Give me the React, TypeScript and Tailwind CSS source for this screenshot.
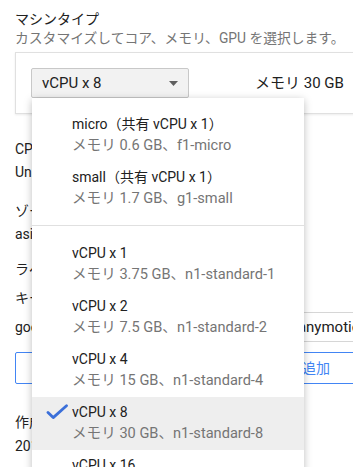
import React from 'react';

type MachineOption = {
  title: string;
  detail: string;
  selected?: boolean;
};

const sharedCore: MachineOption[] = [
  { title: 'micro（共有 vCPU x 1）', detail: 'メモリ 0.6 GB、f1-micro' },
  { title: 'small（共有 vCPU x 1）', detail: 'メモリ 1.7 GB、g1-small' },
];

const standard: MachineOption[] = [
  { title: 'vCPU x 1', detail: 'メモリ 3.75 GB、n1-standard-1' },
  { title: 'vCPU x 2', detail: 'メモリ 7.5 GB、n1-standard-2' },
  { title: 'vCPU x 4', detail: 'メモリ 15 GB、n1-standard-4' },
  { title: 'vCPU x 8', detail: 'メモリ 30 GB、n1-standard-8', selected: true },
  { title: 'vCPU x 16', detail: 'メモリ 60 GB、n1-standard-16' },
  { title: 'vCPU x 32', detail: 'メモリ 120 GB、n1-standard-32' },
];

const OptionRow: React.FC<{ option: MachineOption }> = ({ option }) => (
  <div className={`flex h-[53px] pt-[5px] ${option.selected ? 'bg-[#eeeeee]' : ''}`}>
    <div className="w-[40px] shrink-0 pl-[14px] pt-[2px]">
      {option.selected && (
        <svg width="22" height="16" viewBox="0 0 22 16" fill="none">
          <path d="M2 8.5 L7.2 13.6 L20.5 1.8" stroke="#3b6fd9" strokeWidth="2.8" strokeLinecap="round" strokeLinejoin="round" />
        </svg>
      )}
    </div>
    <div className="leading-[21px] whitespace-nowrap">
      <div className="text-[14px] text-[#212121]">{option.title}</div>
      <div className="text-[14.6px] text-[#757575]">{option.detail}</div>
    </div>
  </div>
);

const MachineDropdown: React.FC = () => (
  <div className="absolute left-[1px] top-[30px] z-10 w-[272px] h-[420px] bg-white shadow-[0_2px_8px_rgba(0,0,0,0.26)]">
    <div className="pt-[11px] pb-[10px]">
      {sharedCore.map((o) => (
        <OptionRow key={o.title} option={o} />
      ))}
    </div>
    <div className="h-px bg-[#e0e0e0]" />
    <div className="pt-[12px]">
      {standard.map((o) => (
        <OptionRow key={o.title} option={o} />
      ))}
    </div>
  </div>
);

export default function App() {
  return (
    <div className="relative w-[353px] h-[467px] overflow-hidden bg-white text-[#212121] font-[family-name:Roboto,'Noto_Sans_CJK_JP',sans-serif]">
      <div className="px-[15px] pt-[9px]">
        <div className="text-[14px] leading-[20px]">マシンタイプ</div>
        <div className="text-[13.8px] leading-[19px] text-[#757575] whitespace-nowrap">
          カスタマイズしてコア、メモリ、GPU を選択します。
        </div>

        <div className="mt-[4px] w-[380px] flex items-center border border-[#e0e0e0] p-[15px] shadow-[0_1px_2px_rgba(0,0,0,0.08)]">
          <div className="relative">
            <button
              type="button"
              className="flex w-[158px] h-[30px] items-center justify-between rounded-[2px] border border-[#c8c8c8] bg-[#f2f2f2] pl-[10px] pr-[10px] text-[15px] text-[#212121]"
            >
              <span>vCPU x 8</span>
              <svg width="9" height="5" viewBox="0 0 9 5">
                <path d="M0 0 H9 L4.5 5 Z" fill="#5f5f5f" />
              </svg>
            </button>
            <MachineDropdown />
          </div>
          <div className="ml-[66px] text-[15px] whitespace-nowrap">メモリ 30 GB</div>
        </div>

        <div className="mt-[24px] text-[14px] leading-[23px] whitespace-nowrap">
          <div>CPU プラットフォーム</div>
          <div>Unknown CPU Platform</div>
        </div>

        <div className="mt-[16px] text-[14px] leading-[23px] whitespace-nowrap">
          <div>ゾーン</div>
          <div>asia-northeast1-a</div>
        </div>

        <div className="mt-[12px] text-[14px] whitespace-nowrap">
          <div className="leading-[23px]">ラベル</div>
          <div className="grid grid-cols-[242px_200px]">
            <div className="h-[32px] pt-[7px] leading-[20px]">キー</div>
            <div className="h-[32px] pt-[7px] leading-[20px] border-b border-[#d6d6d6]">値</div>
            <div className="h-[29px] pt-[4px] leading-[20px]">goog-dm</div>
            <div className="h-[29px] pt-[4px] leading-[20px] text-[15px] border-b border-[#d6d6d6]">cloud-anymotion</div>
          </div>
          <button
            type="button"
            className="mt-[10px] flex w-[380px] h-[32px] items-center justify-end pr-[64px] rounded-[2px] border border-[#4285f4] text-[14px] text-[#4285f4]"
          >
            + ラベルを追加
          </button>
        </div>

        <div className="mt-[26px] text-[14px] leading-[24px] whitespace-nowrap">
          <div>作成日時</div>
          <div>2018/04/12 14:31:20</div>
        </div>
      </div>
    </div>
  );
}
